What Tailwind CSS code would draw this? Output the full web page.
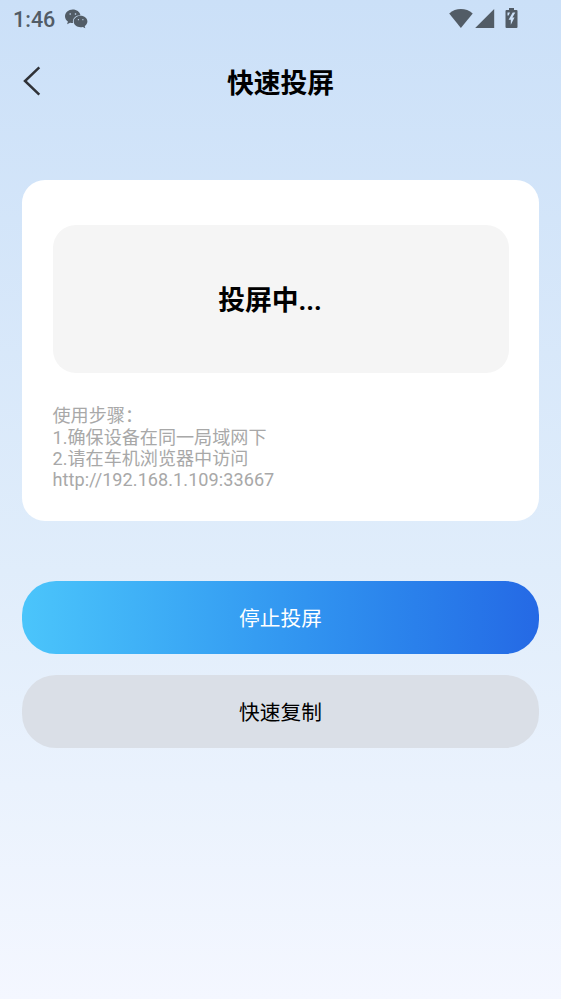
<!DOCTYPE html>
<html lang="zh-CN">
<head>
<meta charset="utf-8">
<title>快速投屏</title>
<script src="https://cdn.jsdelivr.net/npm/@tailwindcss/browser@4"></script>
</head>
<body class="font-['Roboto','Noto_Sans_CJK_SC',sans-serif]">
<main class="flex h-[999px] w-[561px] flex-col overflow-hidden bg-linear-to-b from-[#cbe0f8] via-[#e0edfb] via-57% to-[#f4f7ff]">
  <div class="flex h-[38px] shrink-0 items-center pl-[13px] pr-[43px] text-[#525c66]">
    <span class="w-[52px] text-[21.5px] font-medium leading-[38px] pt-[2px]">1:46</span>
    <svg class="h-[20px] w-[23px]" viewBox="0 0 23 20" fill="currentColor">
      <path fill-rule="evenodd" d="M7.800.5C3.400.5 0 3.500 0 7.300c0 2.200 1.100 4.100 2.900 5.300l-.8 2.700 3-1.600c.9.300 1.800.4 2.900.4-.8-4.700 2.600-7.900 7.500-7.900C14.800 2.800 11.600.5 7.800.5ZM5.200 4.200a.8.8 0 1 1 0 1.600.8.8 0 0 1 0-1.600Zm5.300 0a.8.8 0 1 1 0 1.600.8.8 0 0 1 0-1.600Z"/>
      <path fill-rule="evenodd" d="M15.600 6.800c-3.900 0-6.900 2.600-6.900 5.700s3 5.700 6.900 5.700c.8 0 1.500-.1 2.200-.3l2.500 1.400-.6-2.300c1.600-1 2.700-2.600 2.700-4.500 0-3.100-3-5.700-6.800-5.700Zm-2.200 3.300a.6.6 0 1 1 0 1.200.6.6 0 0 1 0-1.200Zm4.500 0a.6.6 0 1 1 0 1.200.6.6 0 0 1 0-1.200Z"/>
    </svg>
    <svg class="ml-auto h-[20px] w-[24px]" viewBox="0 0 24 20" fill="currentColor"><path d="M.2 4.500C3.500 1.300 7.600 0 11.900 0s8.500 1.300 11.800 4.500L11.900 19Z"/></svg>
    <svg class="ml-[2px] h-[20px] w-[20px]" viewBox="0 0 20 20" fill="currentColor"><path d="M19.200 0v19H.2Z"/></svg>
    <svg class="ml-[10px] h-[20px] w-[13px] -translate-y-px" viewBox="0 0 13 20" fill="currentColor"><path fill-rule="evenodd" d="M4 0h5v2h2.500q1 0 1 1v16q0 1-1 1h-10q-1 0-1-1V3q0-1 1-1H4ZM2.500 4.500v3H3.600L5 4.500ZM7.700 4.500 3.600 11.800h2.200v5L9.500 9.500H7.400L10.300 4.500Z"/></svg>
  </div>
  <header class="grid h-[88px] shrink-0 grid-cols-[80px_1fr_80px] items-center">
    <svg class="ml-[22px] h-[32px] w-[20px]" viewBox="0 0 20 32" fill="none" stroke="#303237" stroke-width="2.500"><path d="M17.300 1.300 3 15 17.300 28.700"/></svg>
    <h1 class="pt-[4px] text-center text-[26.800px] font-bold leading-[40px]">快速投屏</h1>
  </header>
  <section class="mx-[22px] mt-[54px] h-[341px] shrink-0 rounded-[23px] bg-white px-[30.500px] pt-[45px]">
    <div class="flex h-[148px] items-center justify-center rounded-[23px] bg-[#f5f5f5] pr-[21px] pt-[4px] text-[26.800px] font-bold">投屏中...</div>
    <div class="mt-[32px] text-[18.100px] leading-[21.500px] text-[#a8a8a8]">
      <p>使用步骤：</p>
      <p>1.确保设备在同一局域网下</p>
      <p>2.请在车机浏览器中访问</p>
      <p class="-mt-px tracking-[0.050px]">http://192.168.1.109:33667</p>
    </div>
  </section>
  <div class="mx-[22px] mt-[60px] flex flex-col gap-[21px] text-[20.700px]">
    <button class="h-[73px] rounded-[34px] bg-linear-to-r from-[#4bc5fb] to-[#2569e5] pt-[4px] text-white">停止投屏</button>
    <button class="h-[73px] rounded-[34px] bg-[#dadfe7] pt-[4px] text-black">快速复制</button>
  </div>
</main>
</body>
</html>
